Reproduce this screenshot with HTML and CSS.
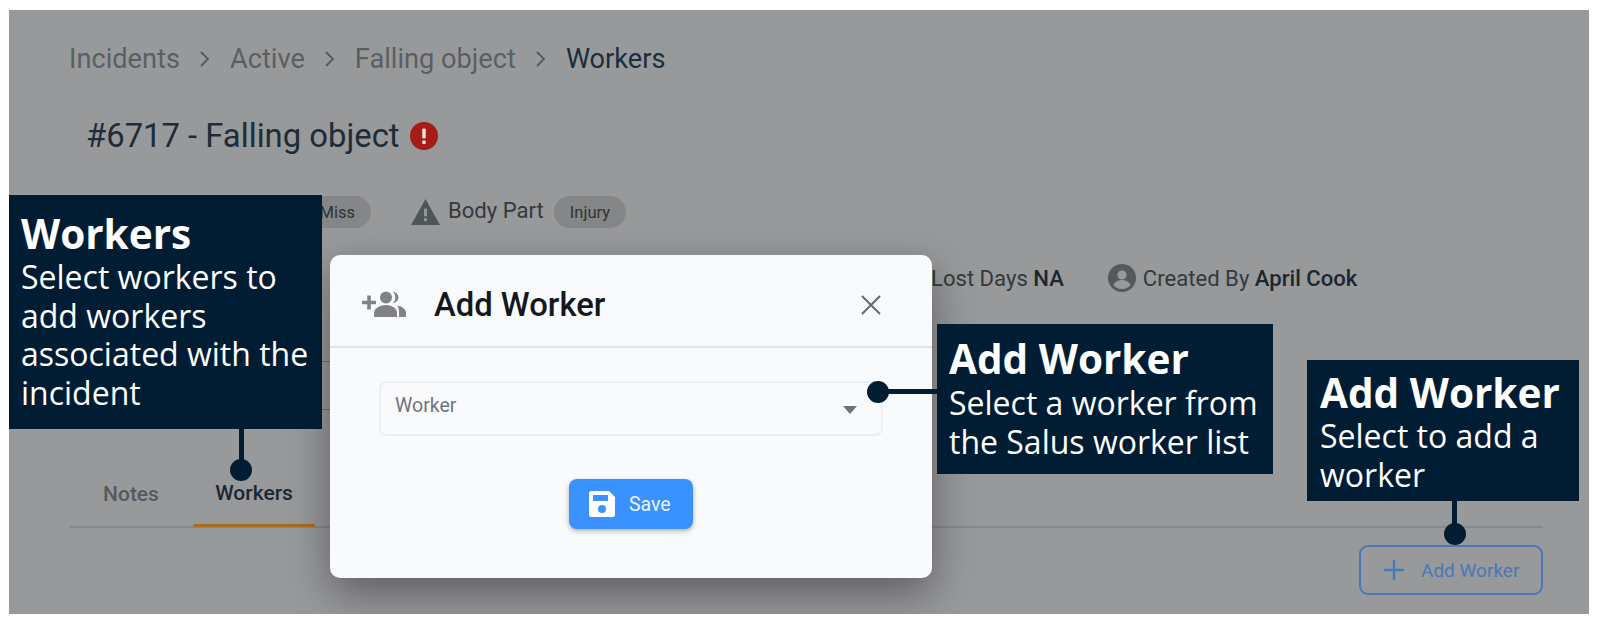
FILE: index.html
```html
<!DOCTYPE html>
<html lang="en">
<head>
<meta charset="utf-8">
<title>Add Worker</title>
<link rel="stylesheet" href="styles.css">
</head>
<body>
<main class="panel">
  <nav class="crumbs">
    <span>Incidents</span><svg class="sep" viewBox="0 0 9 16"><path d="M1 1l7 7-7 7" stroke="#55595c" stroke-width="1.800" fill="none"/></svg>
    <span>Active</span><svg class="sep" viewBox="0 0 9 16"><path d="M1 1l7 7-7 7" stroke="#55595c" stroke-width="1.800" fill="none"/></svg>
    <span>Falling object</span><svg class="sep" viewBox="0 0 9 16"><path d="M1 1l7 7-7 7" stroke="#55595c" stroke-width="1.800" fill="none"/></svg>
    <span class="current">Workers</span>
  </nav>
  <h1 class="title">#6717 - Falling object
    <svg class="alert" viewBox="0 0 28 28"><circle cx="14" cy="14" r="14" fill="#a81c16"/><rect x="12.2" y="6.5" width="3.6" height="10" rx="1" fill="#ddd"/><rect x="12.2" y="18.5" width="3.6" height="3.4" rx="1" fill="#ddd"/></svg>
  </h1>
  <div class="tags">
    <span class="chip chip-miss">Miss</span>
    <svg class="warn" viewBox="0 0 30 27"><path d="M15 0 30 27H0Z" fill="#4f5659"/><rect x="13.5" y="10" width="3" height="8" fill="#98999b"/><rect x="13.5" y="20" width="3" height="3" fill="#98999b"/></svg>
    <span class="label">Body Part</span>
    <span class="chip">Injury</span>
  </div>
  <div class="facts">
    <span class="label">Lost Days <b>NA</b></span>
    <svg class="person" viewBox="0 0 28 28"><circle cx="14" cy="14" r="14" fill="#55595c"/><circle cx="14" cy="11" r="4.6" fill="#98999b"/><path d="M5.500 21c1.500-3.600 5-5 8.500-5s7 1.400 8.500 5c-2 2.600-5 4-8.500 4s-6.500-1.400-8.500-4Z" fill="#98999b"/></svg>
    <span class="label">Created By <b>April Cook</b></span>
  </div>
  <div class="hidden-box"></div>
  <div class="tabs">
    <span class="tab">Notes</span>
    <span class="tab tab-on">Workers</span>
  </div>
  <div class="actions">
    <button class="add">
      <svg class="plus" viewBox="0 0 20 20"><path d="M10 0v20M0 10h20" stroke="#4a78b5" stroke-width="2.400" fill="none"/></svg>
      Add Worker
    </button>
  </div>

  <section class="modal">
    <header class="modal-head">
      <svg class="group" viewBox="0 0 44 26"><path d="M5.200 4.500h3.600v5.200H14v3.600H8.800v5.200H5.200v-5.200H0V9.700h5.200z" fill="#808285"/><circle cx="24" cy="6.500" r="6" fill="#808285"/><path d="M31 .8c3.200.6 5.500 3 5.500 5.700s-2.300 5.100-5.500 5.700c1.400-1.600 2.300-3.500 2.300-5.700S32.400 2.400 31 .8Z" fill="#808285"/><path d="M12 26v-4c0-5 6.500-8 12-8s11 3 11 8v4Z" fill="#808285"/><path d="M35.500 14.500c4.700 1 8.500 3.500 8.500 7.500v4h-7v-4c0-3-.5-5.500-1.500-7.500Z" fill="#808285"/></svg>
      <h2 class="modal-title">Add Worker</h2>
      <svg class="close" viewBox="0 0 20 20"><path d="M1 1l18 18M19 1 1 19" stroke="#63696f" stroke-width="2" fill="none"/></svg>
    </header>
    <div class="modal-body">
      <div class="select">
        <span>Worker</span>
        <i class="caret"></i>
      </div>
      <button class="save">
        <svg class="disk" viewBox="0 0 26 26"><path d="M2.500 0H20l6 6v17.500a2.500 2.500 0 0 1-2.500 2.500h-21A2.500 2.500 0 0 1 0 23.500v-21A2.500 2.500 0 0 1 2.500 0Z" fill="#fff"/><rect x="4" y="4" width="15" height="6" fill="#3a92fe"/><circle cx="13" cy="18" r="4" fill="#3a92fe"/></svg>
        Save
      </button>
    </div>
  </section>

  <aside class="note note-workers">
    <strong>Workers</strong>
    <p>Select workers to add workers associated with the incident</p>
  </aside>
  <aside class="note note-select">
    <strong>Add Worker</strong>
    <p>Select a worker from the Salus worker list</p>
  </aside>
  <aside class="note note-add">
    <strong>Add Worker</strong>
    <p>Select to add a worker</p>
  </aside>
</main>
</body>
</html>
```
FILE: styles.css
```css
* { box-sizing: border-box; }
html, body { margin: 0; background: #fff; }
body { padding: 10px 11px 6px 9px; height: 620px; overflow: hidden; font-family: Roboto, "Liberation Sans", sans-serif; }
.panel { position: relative; height: 604px; overflow: hidden; background: #98999b; padding: 1px 46px 0 60px; color: #1d2a36; }

.crumbs { display: flex; align-items: center; gap: 20.500px; height: 70px; padding-top: 25px; font-size: 27.200px; color: #5a5f63; }
.sep { width: 9px; height: 16px; }
.crumbs .current { color: #1c2d3c; }

.title { display: flex; align-items: center; gap: 10px; margin: 33px 0 0 17px; height: 44px; font-size: 32.800px; font-weight: 400; color: #1f2c38; }
.alert { width: 28px; height: 28px; }

.tags { display: flex; align-items: center; gap: 8px; margin: 38px 0 0 222px; height: 32px; }
.chip { display: inline-flex; align-items: center; justify-content: center; height: 32px; padding: 0 16px; border-radius: 16px; background: #858687; font-size: 16.500px; color: #2e3336; }
.chip-miss { width: 80px; justify-content: flex-end; margin-right: 32px; }
.warn { width: 29px; height: 26px; }
.label { font-size: 22.100px; color: #35393c; }
.label b { font-weight: 500; color: #1c2731; }
.tags .label { margin-right: 2px; margin-top: -4px; }

.facts { display: flex; align-items: center; margin: 36px 0 0 862px; height: 28px; }
.facts .label:first-child { margin-right: 44px; }
.person { width: 28px; height: 28px; margin-right: 7px; }

.hidden-box { width: 500px; height: 49px; margin-top: 69px; border-top: 1px solid #4a78b5; border-bottom: 1px solid #4a78b5; }

.tabs { display: flex; margin-top: 57px; height: 61px; border-bottom: 2px solid #88898b; }
.tab { display: flex; align-items: center; justify-content: center; height: 60px; padding-bottom: 6px; font-size: 21px; font-weight: 500; color: #55595c; }
.tab:first-child { width: 124px; }
.tab-on { width: 122px; color: #1c2731; border-bottom: 3px solid #a86f20; }

.actions { display: flex; justify-content: flex-end; margin-top: 17px; }
.add { display: flex; align-items: center; gap: 17px; width: 184px; height: 50px; padding: 0 0 0 23px; background: none; border: 2px solid #4a78b5; border-radius: 9px; font: 400 19px Roboto, sans-serif; color: #4a78b5; }
.plus { width: 20px; height: 20px; }

.modal { position: absolute; left: 321px; top: 245px; width: 602px; height: 323px; background: #f9fafc; border-radius: 10px; box-shadow: 0 16px 44px rgba(0, 0, 0, .38); }
.modal-head { display: flex; align-items: center; height: 93px; padding: 7px 51px 0 32px; border-bottom: 2px solid #e2e4e7; }
.group { width: 44px; height: 26px; margin-right: 28px; }
.modal-title { flex: 1; margin: 2px 0 0; font-size: 32.800px; font-weight: 500; color: #14181c; }
.close { width: 20px; height: 20px; margin-top: 2px; }
.modal-body { display: flex; flex-direction: column; align-items: center; padding: 33px 49px 0; }
.select { display: flex; align-items: center; justify-content: space-between; width: 504px; height: 55px; padding: 0 24px 6px 14px; border: 2px solid #edeff2; border-radius: 8px; font-size: 19.500px; color: #6d757c; }
.caret { width: 0; height: 0; margin-top: 8px; border: 7px solid transparent; border-top: 8px solid #6f7276; border-bottom: 0; }
.save { display: flex; align-items: center; gap: 14px; width: 124px; height: 50px; margin-top: 43px; padding: 0 0 0 20px; background: #3a92fe; border: 0; border-radius: 8px; box-shadow: 0 2px 5px rgba(0, 0, 0, .3); font: 400 19.500px Roboto, sans-serif; color: #e9f2ff; }
.disk { width: 26px; height: 26px; }

.note { position: absolute; padding: 15px 6px 0 12px; background: #011d33; color: #fff; font-family: "Open Sans", sans-serif; }
.note strong { display: block; font-size: 40.500px; line-height: 48px; font-weight: 700; }
.note p { margin: 0; font-size: 32px; line-height: 38.500px; font-weight: 400; }
.note::before { content: ""; position: absolute; background: #011d33; }
.note::after { content: ""; position: absolute; width: 22px; height: 22px; border-radius: 50%; background: #011d33; }

.note-workers { left: 0; top: 185px; width: 313px; height: 234px; }
.note-workers::before { left: 230px; top: 100%; width: 5px; height: 32px; }
.note-workers::after { left: 221px; top: 264px; }

.note-select { left: 928px; top: 314px; width: 336px; height: 150px; padding-top: 11px; }
.note-select strong { margin-bottom: 1px; }
.note-select::before { left: -60px; top: 65px; width: 60px; height: 5px; }
.note-select::after { left: -70px; top: 57px; }

.note-add { left: 1298px; top: 350px; width: 272px; height: 141px; padding: 9px 6px 0 13px; }
.note-add::before { left: 145px; top: 100%; width: 5px; height: 30px; }
.note-add::after { left: 137px; top: 163px; }
```
